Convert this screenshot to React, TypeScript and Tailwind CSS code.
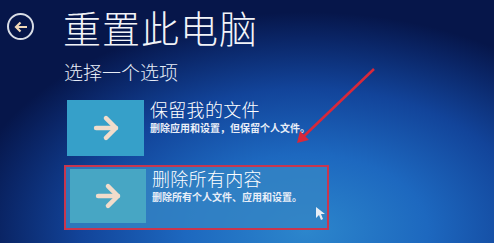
import { ArrowRight } from 'lucide-react';

const font = { fontFamily: '"Noto Sans CJK SC", "Noto Sans", sans-serif' };

function OptionCard({
  title,
  desc,
  selected,
}: {
  title: string;
  desc: string;
  selected?: boolean;
}) {
  return (
    <div
      className={`flex w-[265px] gap-[6px] border-2 ${
        selected
          ? 'h-[65px] border-[#c8364e] bg-[#3584c4]/80 p-[2px] pl-[4px]'
          : 'h-[60px] border-transparent p-[1px] pl-[1px]'
      }`}
    >
      <div
        className={`flex shrink-0 items-center justify-center ${
          selected ? 'h-[54px] w-[76px] bg-[#47a6c4]' : 'h-[56px] w-[77px] bg-[#36a0c9]'
        }`}
      >
        <ArrowRight className="size-[34px] text-[#f1dccb]" strokeWidth={3.2} />
      </div>
      <div className="flex flex-col text-white">
        <p className="-mt-[1px] text-[18px] leading-[20px] font-light tracking-[0.3px]">{title}</p>
        <p className="mt-[3px] text-[10px] leading-[11px] font-bold text-[#e8eef8]">{desc}</p>
      </div>
    </div>
  );
}

export default function App() {
  return (
    <div
      style={font}
      className="relative h-[243px] w-[494px] overflow-hidden bg-[radial-gradient(ellipse_70%_90%_at_62%_95%,#2c86cc_0%,#1d68bf_35%,#12449a_65%,#0a2566_88%,#06164a_100%)]"
    >
      <div className="flex">
        <div className="w-[57px] shrink-0 pl-[7px] pt-[13px]">
          <div className="flex size-[27px] items-center justify-center rounded-full border-2 border-[#d8dde6]">
            <svg width="14" height="12" viewBox="0 0 14 12" fill="none">
              <path d="M13 6H2M6.5 1.5 2 6l4.5 4.5" stroke="#f0d8b8" strokeWidth="2.2" />
            </svg>
          </div>
        </div>
        <div className="flex flex-col pl-[7px]">
          <h1 className="mt-[5px] -ml-[1px] text-[38px] leading-[44px] font-light tracking-[1px] text-[#f2f4f8]">
            重置此电脑
          </h1>
          <p className="mt-[12px] text-[19px] leading-[22px] font-light text-[#e6ecf6]">
            选择一个选项
          </p>
          <div className="mt-[14px] flex flex-col gap-[8px]">
            <OptionCard title="保留我的文件" desc="删除应用和设置，但保留个人文件。" />
            <OptionCard title="删除所有内容" desc="删除所有个人文件、应用和设置。" selected />
          </div>
        </div>
      </div>

      <svg className="absolute inset-0" width="494" height="243" viewBox="0 0 494 243">
        <line x1="374" y1="69" x2="303" y2="137" stroke="#d8283a" strokeWidth="2.5" />
        <path d="M297 143 L300 131 L309 140 Z" fill="#d8283a" />
        <path d="M316 207 L316 218 L319 215 L321 220 L323 219 L321 214 L325 214 Z" fill="#e8eef6" />
      </svg>
    </div>
  );
}
